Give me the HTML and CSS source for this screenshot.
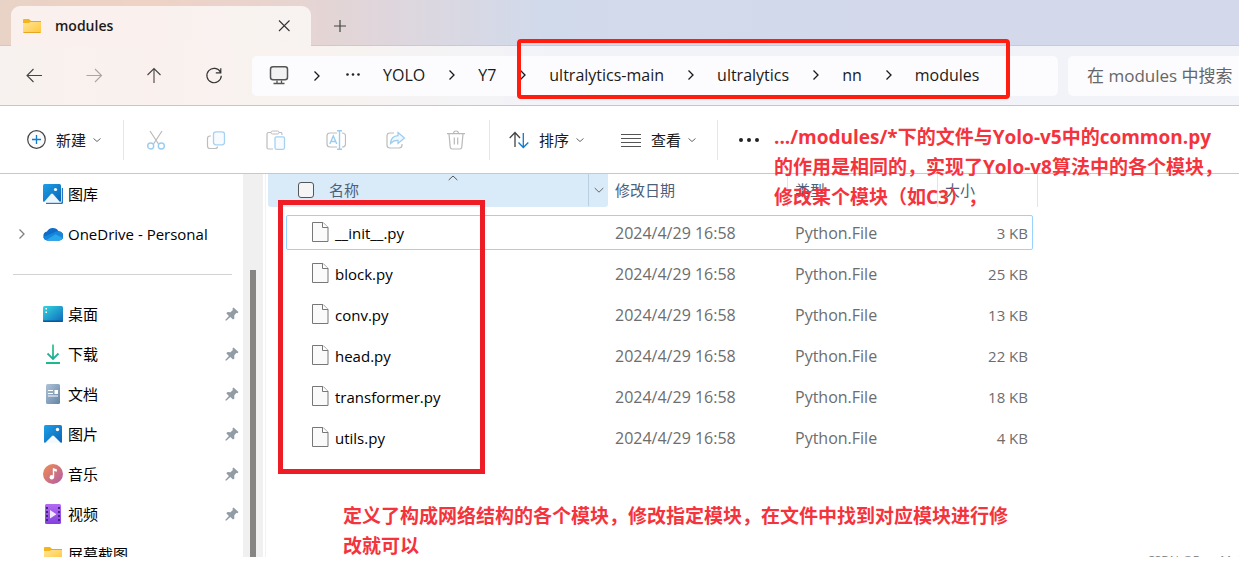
FILE: index.html
```html
<!DOCTYPE html>
<html lang="zh-CN">
<head>
<meta charset="utf-8">
<title>modules</title>
<link rel="stylesheet" href="styles.css">
</head>
<body>
<svg class="defs" aria-hidden="true">
  <defs>
    <linearGradient id="blue" x1="0" y1="0" x2="1" y2="1"><stop offset="0" stop-color="#1ea0e6"/><stop offset="1" stop-color="#0a63b8"/></linearGradient>
    <linearGradient id="teal" x1="0" y1="0" x2="1" y2="1"><stop offset="0" stop-color="#36d6dd"/><stop offset="1" stop-color="#0c68bd"/></linearGradient>
    <linearGradient id="green" x1="0" y1="0" x2="0" y2="1"><stop offset="0" stop-color="#35c98b"/><stop offset="1" stop-color="#14a59a"/></linearGradient>
    <linearGradient id="slate" x1="0" y1="0" x2="1" y2="1"><stop offset="0" stop-color="#afc3d8"/><stop offset="1" stop-color="#6484a4"/></linearGradient>
    <linearGradient id="music" x1="0" y1="0" x2="1" y2="1"><stop offset="0" stop-color="#f28e4f"/><stop offset="1" stop-color="#b05bab"/></linearGradient>
    <linearGradient id="violet" x1="0" y1="0" x2="0" y2="1"><stop offset="0" stop-color="#b36bf2"/><stop offset="1" stop-color="#8440e0"/></linearGradient>
    <linearGradient id="gold" x1="0" y1="0" x2="1" y2="1"><stop offset="0" stop-color="#ffe59b"/><stop offset="1" stop-color="#ffc83a"/></linearGradient>
    <symbol id="folder" viewBox="0 0 20 20"><path d="M1 4q0-1 1-1h5l2 2v3H1z" fill="#f4b41c"/><path d="M1 7h6l2-2h9q1 0 1 1v10q0 1-1 1H2q-1 0-1-1z" fill="url(#gold)"/><path d="M8 5.500h11M1.500 16.500h17" stroke="#e6a522" fill="none"/></symbol>
    <symbol id="chev" viewBox="0 0 10 14"><path d="M2.500 2.500 7 7l-4.500 4.500" fill="none" stroke="currentColor" stroke-width="1.300"/></symbol>
    <symbol id="down" viewBox="0 0 10 6"><path d="M1.500 1.500 5 4.500l3.500-3" fill="none" stroke="currentColor"/></symbol>
    <symbol id="pin" viewBox="0 0 14 14"><path d="M8.500.5 13.500 5l-1 1.300-1.300-.2-2 2.300.2 3-1.400 1.200-2.700-2.500L1.500 13.500.5 13.600.4 12.700 3.900 9 1.300 6.300 2.500 5.100l3 .1L7.800 3 7.500 1.600z" fill="#929ca5"/></symbol>
    <symbol id="file" viewBox="0 0 18 22"><path d="M1.500 1.500h10.500l5 5v14H1.500z" fill="#fafafa" stroke="#777"/><path d="M11.500 1.500v5H17" fill="#fff" stroke="#777"/></symbol>
  </defs>
</svg>

<div class="window">
  <header class="titlebar">
    <div class="tab">
      <svg class="i20"><use href="#folder"/></svg>
      <span class="tab-title">modules</span>
      <button class="icon-btn" aria-label="关闭"><svg class="i14" viewBox="0 0 14 14"><path d="M2 1.500 12.500 12M12.500 1.500 2 12" stroke="#333" stroke-width="1.100"/></svg></button>
    </div>
    <button class="icon-btn new-tab" aria-label="新标签"><svg class="i14" viewBox="0 0 14 14"><path d="M7 1v12M1 7h12" stroke="#444" stroke-width="1.200"/></svg></button>
  </header>

  <nav class="navbar">
    <div class="nav-buttons">
      <button class="icon-btn" aria-label="后退"><svg class="i20" viewBox="0 0 20 20"><path d="M18 9.500H3M9.500 3 3 9.500 9.500 16" fill="none" stroke="#444" stroke-width="1.100"/></svg></button>
      <button class="icon-btn" aria-label="前进"><svg class="i20" viewBox="0 0 20 20"><path d="M2.500 9.500h15M11 3l6.500 6.500L11 16" fill="none" stroke="#aaa5a3" stroke-width="1.100"/></svg></button>
      <button class="icon-btn" aria-label="向上"><svg class="i20" viewBox="0 0 20 20"><path d="M10 17V2.500M3.500 9 10 2.500 16.500 9" fill="none" stroke="#444" stroke-width="1.100"/></svg></button>
      <button class="icon-btn" aria-label="刷新"><svg class="i20" viewBox="0 0 20 20"><path d="M16.500 6.200A7.200 7.200 0 1 0 17.300 9.800M16.800 2.300v4.500h-5" fill="none" stroke="#333" stroke-width="1.200"/></svg></button>
    </div>
    <div class="address">
      <svg class="i20" viewBox="0 0 20 20"><rect x="1.500" y=".8" width="17" height="13" rx="2.500" fill="#f2f2f2" stroke="#555" stroke-width="1.500"/><path d="M8 14.500v2.500M12.500 14.500v2.500M4.500 17.500h11" stroke="#555" stroke-width="1.300"/></svg>
      <svg class="chev root"><use href="#chev"/></svg>
      <button class="icon-btn" aria-label="更多路径"><svg class="i16" viewBox="0 0 16 16"><g fill="#222"><circle cx="2.500" cy="6.500" r="1.300"/><circle cx="8" cy="6.500" r="1.300"/><circle cx="13.500" cy="6.500" r="1.300"/></g></svg></button>
      <ol class="crumbs">
        <li><a href="#">YOLO</a></li>
        <li><svg class="chev"><use href="#chev"/></svg><a href="#">Y7</a></li>
        <li><svg class="chev"><use href="#chev"/></svg><a href="#">ultralytics-main</a></li>
        <li><svg class="chev"><use href="#chev"/></svg><a href="#">ultralytics</a></li>
        <li><svg class="chev"><use href="#chev"/></svg><a href="#">nn</a></li>
        <li><svg class="chev"><use href="#chev"/></svg><a href="#">modules</a></li>
      </ol>
    </div>
    <input class="search" type="text" aria-label="搜索" placeholder="在 modules 中搜索">
  </nav>

  <div class="toolbar">
    <button class="cmd"><svg class="i20" viewBox="0 0 20 20"><circle cx="10.500" cy="9.500" r="8.800" fill="#fafafa" stroke="#444" stroke-width="1.200"/><path d="M10.500 5v9M6 9.500h9" stroke="#0f7bd0" stroke-width="1.300"/></svg>新建<svg class="down"><use href="#down"/></svg></button>
    <div class="group">
      <button class="icon-btn" aria-label="剪切"><svg class="i20" viewBox="0 0 20 20"><path d="M4 1l8.500 13M16 1 7.500 14" stroke="#b9b9b9" stroke-width="1.200"/><g fill="none" stroke="#9accf0" stroke-width="1.400"><circle cx="4.700" cy="16" r="3"/><circle cx="15.300" cy="16" r="3"/></g></svg></button>
      <button class="icon-btn" aria-label="复制"><svg class="i20" viewBox="0 0 20 20"><path d="M5 6H4Q1.500 6 1.500 8.500V16q0 2.500 2.500 2.500h5q2.500 0 2.500-2" fill="none" stroke="#bdbdbd" stroke-width="1.200"/><rect x="7.500" y="1.800" width="11" height="13" rx="2.500" fill="#f7fbfe" stroke="#a5d1f2" stroke-width="1.300"/></svg></button>
      <button class="icon-btn" aria-label="粘贴"><svg class="i20" viewBox="0 0 20 20"><path d="M7 19H2.500q-1.500 0-1.500-1.500V4q0-1.500 1.500-1.500H5m8 0h2.500Q16 2.500 16 5" fill="none" stroke="#bdbdbd" stroke-width="1.200"/><rect x="5" y="1" width="8" height="3" rx="1.500" fill="#fff" stroke="#bdbdbd"/><rect x="9" y="6.800" width="9.500" height="12.500" rx="1.500" fill="#f7fbfe" stroke="#a5d1f2" stroke-width="1.300"/></svg></button>
      <button class="icon-btn" aria-label="重命名"><svg class="i20" viewBox="0 0 20 20"><path d="M11 3H4Q1 3 1 6v8q0 3 3 3h7M16 3q3.500 0 3.500 3v8q0 3-3.500 3" fill="none" stroke="#bdbdbd" stroke-width="1.200"/><path d="M3.800 14 7.300 6l3.500 8M5 11.500h4.600M11 .7h5M11 19.300h5M13.500.7v18.600" fill="none" stroke="#9accf0" stroke-width="1.400"/></svg></button>
      <button class="icon-btn" aria-label="共享"><svg class="i20" viewBox="0 0 20 20"><path d="M8 3H4Q1 3 1 6v9q0 3 3 3h9q3 0 3-3v-1" fill="none" stroke="#bdbdbd" stroke-width="1.200"/><path d="M12 2.500 18.500 8 12 13.500V10.300Q7.500 10 4.500 13.500 5 6 12 5.700z" fill="#eef7fd" stroke="#9accf0" stroke-width="1.200"/></svg></button>
      <button class="icon-btn" aria-label="删除"><svg class="i20" viewBox="0 0 20 20"><path d="M1 3.700h18M3 4l1.200 13q.2 2 2 2h7.600q1.800 0 2-2L17 4M7.500 3.500q0-2.500 2.500-2.500t2.500 2.500M8.300 7.500v7M11.700 7.500v7" fill="none" stroke="#b9b9b9" stroke-width="1.200"/></svg></button>
    </div>
    <div class="group menus">
      <button class="cmd"><svg class="i20" viewBox="0 0 20 20"><path d="M6 17V2.500M.7 8 6 2.500 11 8" fill="none" stroke="#444" stroke-width="1.300"/><path d="M14.300 3v14.500M9.500 12.500l4.800 5 5-5" fill="none" stroke="#0f7bd0" stroke-width="1.300"/></svg>排序<svg class="down"><use href="#down"/></svg></button>
      <button class="cmd"><svg class="i20" viewBox="0 0 20 20"><path d="M0 4.500h20M0 8.500h20M0 12.500h20M0 16.500h20" stroke="#555"/></svg>查看<svg class="down"><use href="#down"/></svg></button>
    </div>
    <button class="icon-btn more" aria-label="更多"><svg class="i22" viewBox="0 0 22 22"><g fill="#222"><circle cx="3" cy="11" r="2"/><circle cx="11" cy="11" r="2"/><circle cx="19" cy="11" r="2"/></g></svg></button>
  </div>

  <div class="content">
    <aside class="sidebar">
      <ul class="places">
        <li><svg class="i20" viewBox="0 0 20 20"><path d="M3 19.500h14.500q2 0 2-2V4" fill="none" stroke="#2476c2" stroke-width="1.500"/><rect width="18" height="18" rx="1.500" fill="url(#blue)"/><path d="M1 18 8 10q1-1 2 0l7 8z" fill="#eaf5fd"/><circle cx="12.500" cy="5.500" r="1.600" fill="#fff"/></svg><span>图库</span></li>
        <li class="expandable"><svg class="chev grey"><use href="#chev"/></svg><svg class="i20" viewBox="0 0 20 20"><path d="M4.500 16.500A4.500 4.500 0 0 1 4 7.600 6.500 6.500 0 0 1 15.500 7.300 4.600 4.600 0 0 1 16 16.500z" fill="#0f6cc9"/><path d="M4.500 16.500Q1 16 .3 13L11 8.500q3-2 6-.8 3 1.300 3 4.500 0 4.300-4.500 4.300z" fill="#1686dc"/><path d="M3 16.300 12.500 10.300 19.700 14q-1 2.500-4 2.500H4.500z" fill="#28a8ea"/></svg><span>OneDrive - Personal</span></li>
        <li class="divider"></li>
        <li><svg class="i20" viewBox="0 0 20 20"><rect y="2" width="20" height="16" rx="1.500" fill="url(#teal)"/><path d="M0 16.500h20V17q0 1-1 1H1q-1 0-1-1z" fill="#0a559c"/><path d="M2.500 4h1.500v1.500H2.500zM2.500 7.500h1.500V9H2.500z" fill="#fff"/></svg><span>桌面</span><svg class="i14"><use href="#pin"/></svg></li>
        <li><svg class="i20" viewBox="0 0 20 20"><path d="M10 .5V15M4.500 9.500l5.500 5.500 5.500-5.500M3 19h14" fill="none" stroke="url(#green)" stroke-width="1.800"/><path d="M3 19h14" stroke="#21bd8c" stroke-width="1.600"/></svg><span>下载</span><svg class="i14"><use href="#pin"/></svg></li>
        <li><svg class="i20" viewBox="0 0 20 20"><rect x="3" width="14" height="20" rx="1.500" fill="url(#slate)"/><path d="M5 6.500h5M5 9.500h5M5 12h10" stroke="#fff"/><path d="M11.500 6H15v4h-3.500z" fill="#fff"/></svg><span>文档</span><svg class="i14"><use href="#pin"/></svg></li>
        <li><svg class="i20" viewBox="0 0 20 20"><rect x="1" y="1" width="18" height="18" rx="1.500" fill="url(#blue)"/><path d="M2 19 9 12q1-1 2 0l7 7z" fill="#f4fafe"/><circle cx="14.500" cy="5.500" r="1.700" fill="#fff"/></svg><span>图片</span><svg class="i14"><use href="#pin"/></svg></li>
        <li><svg class="i20" viewBox="0 0 20 20"><circle cx="10" cy="10" r="10" fill="url(#music)"/><circle cx="8.800" cy="13.300" r="2.200" fill="#fff"/><path d="M9.800 13.500V4l4 1.200v2.500l-2.600-.8v6.600z" fill="#fff"/></svg><span>音乐</span><svg class="i14"><use href="#pin"/></svg></li>
        <li><svg class="i20" viewBox="0 0 20 20"><rect x="2" width="16" height="20" rx="1.500" fill="url(#violet)"/><path d="M4 3v15M16 3v15" stroke="#3f2580" stroke-width="2" stroke-dasharray="2 2"/><path d="M7 6v8.500l6.500-4.200z" fill="#f1e7fd"/></svg><span>视频</span><svg class="i14"><use href="#pin"/></svg></li>
        <li><svg class="i20"><use href="#folder"/></svg><span>屏幕截图</span></li>
      </ul>
      <div class="scrollbar"><div class="thumb"></div></div>
    </aside>

    <main class="files">
      <table>
        <thead>
          <tr>
            <th class="name-head"><input type="checkbox" aria-label="全选"><span>名称</span><svg class="sort-mark" viewBox="0 0 10 6"><path d="M.7 5 5 1l4.300 4" fill="none" stroke="#555"/></svg><button class="icon-btn filter" aria-label="筛选"><svg class="i10" viewBox="0 0 10 10"><path d="M.7 3 5 7.200 9.300 3" fill="none" stroke="#666"/></svg></button></th>
            <th>修改日期</th><th>类型</th><th>大小</th>
          </tr>
        </thead>
        <tbody>
          <tr class="focused"><td><svg class="file"><use href="#file"/></svg>__init__.py</td><td>2024/4/29 16:58</td><td>Python.File</td><td>3 KB</td></tr>
          <tr><td><svg class="file"><use href="#file"/></svg>block.py</td><td>2024/4/29 16:58</td><td>Python.File</td><td>25 KB</td></tr>
          <tr><td><svg class="file"><use href="#file"/></svg>conv.py</td><td>2024/4/29 16:58</td><td>Python.File</td><td>13 KB</td></tr>
          <tr><td><svg class="file"><use href="#file"/></svg>head.py</td><td>2024/4/29 16:58</td><td>Python.File</td><td>22 KB</td></tr>
          <tr><td><svg class="file"><use href="#file"/></svg>transformer.py</td><td>2024/4/29 16:58</td><td>Python.File</td><td>18 KB</td></tr>
          <tr><td><svg class="file"><use href="#file"/></svg>utils.py</td><td>2024/4/29 16:58</td><td>Python.File</td><td>4 KB</td></tr>
        </tbody>
      </table>
    </main>
  </div>

  <div class="mark mark-path"></div>
  <div class="mark mark-files"></div>
  <p class="note note-top">.../modules/*下的文件与Yolo-v5中的common.py<br>的作用是相同的，实现了Yolo-v8算法中的各个模块，<br>修改某个模块（如C3），</p>
  <p class="note note-bottom">定义了构成网络结构的各个模块，修改指定模块，在文件中找到对应模块进行修<br>改就可以</p>
  <span class="credit">CSDN @Run_Mulli</span>
</div>
</body>
</html>
```
FILE: styles.css
```css
* { box-sizing: border-box; }
body {
  margin: 0;
  background: #fff;
  color: #1a1a1a;
  font: 15px/20px "Open Sans", "Noto Sans CJK SC", sans-serif;
}
button, input { font: inherit; color: inherit; }
button { border: 0; padding: 0; background: none; }
svg { display: block; flex: none; }
ul, ol { list-style: none; margin: 0; padding: 0; }
a { color: inherit; text-decoration: none; }
.defs { position: absolute; width: 0; height: 0; }
.i10 { width: 10px; height: 10px; }
.i14 { width: 14px; height: 14px; }
.i16 { width: 16px; height: 16px; }
.i20 { width: 20px; height: 20px; }
.i22 { width: 22px; height: 22px; }
.chev { width: 10px; height: 14px; }
.down { width: 10px; height: 6px; color: #666; }
.icon-btn { display: flex; align-items: center; justify-content: center; }

.window {
  position: relative;
  display: flex;
  flex-direction: column;
  height: calc(100vh - 20px);
  margin-right: 19px;
  overflow: hidden;
}

.titlebar {
  display: flex;
  height: 46px;
  padding: 6px 0 0 11px;
  border-bottom: 1px solid #c6cada;
  background: linear-gradient(90deg, #e8d3c6 0, #eed2c5 12%, #e8d4ce 22%, #dfd6dc 31%, #d1daeb 44%, #d3d9eb 70%);
}
.tab {
  display: flex;
  align-items: center;
  width: 300px;
  height: 40px;
  padding: 0 20px 0 11px;
  border-radius: 9px 9px 0 0;
  background: linear-gradient(90deg, #faf0ed, #faf1ee 50%, #f7f3f1);
}
.tab-title { flex: 1; margin-left: 13px; font-size: 14px; font-weight: 600; }
.new-tab { width: 58px; }

.navbar {
  display: flex;
  align-items: center;
  height: 60px;
  border-bottom: 1px solid #c4c6d4;
  background: linear-gradient(90deg, #f7f2ef 0, #faf1ee 12%, #f7f3f1 28%, #f2f3f9 45%, #f2f3f9);
}
.nav-buttons { display: flex; gap: 40px; padding: 0 28px 0 24px; }
.address {
  display: flex;
  flex: 1;
  align-items: center;
  height: 40px;
  padding-left: 17px;
  border-radius: 5px;
  background: #fcfcfe;
}
.root { margin: 0 23px; }
.crumbs { display: flex; margin-left: 22px; padding-bottom: 1px; font-size: 16px; }
.crumbs li { display: flex; align-items: center; }
.crumbs .chev { margin: 0 21px 0 22px; }
.search {
  width: 171px;
  height: 40px;
  margin-left: 10px;
  padding: 0 0 0 19px;
  border: 0;
  border-radius: 5px 0 0 5px;
  background: #fcfcfe;
  font-size: 17px;
}
.search::placeholder { color: #666; }

.toolbar {
  display: flex;
  align-items: center;
  height: 68px;
  padding-left: 26px;
  border-bottom: 1px solid #c8c6d2;
}
.cmd { display: flex; align-items: center; gap: 10px; }
.cmd .down { margin-left: -4px; }
.group {
  display: flex;
  align-items: center;
  gap: 40px;
  height: 40px;
  margin-left: 21px;
  padding: 0 23px 0 22px;
  border: solid #e6e6e6;
  border-width: 0 1px;
}
.menus { gap: 36px; margin-left: 0; padding: 0 20px 0 19px; border-left: 0; }
.more { margin-left: 20px; }

.content { display: flex; flex: 1; min-height: 0; }
.sidebar {
  display: flex;
  width: 266px;
  padding-right: 2px;
  border-right: 1px solid #f2f2f2;
  overflow: hidden;
}
.places { flex: 1; color: #000; }
.places li { display: flex; align-items: center; gap: 5px; height: 40px; padding: 0 4px 0 43px; }
.places span { flex: 1; white-space: nowrap; }
.places .expandable { gap: 5px; padding-left: 17px; }
.expandable .grey { margin-right: 11px; color: #808080; }
.places .divider { height: 1px; margin: 20px 11px 19px 13px; padding: 0; background: #d2d2d2; }
.scrollbar { width: 20px; padding-top: 96px; background: #f0f0f0; }
.thumb { width: 6px; height: 100%; margin-left: 7px; background: #868584; }

.files { flex: 1; padding-left: 2px; }
table, thead, tbody { display: block; }
tr { display: grid; grid-template-columns: 340px 180px 150px 100px; }
th {
  display: flex;
  align-items: center;
  height: 33px;
  padding: 0 0 2px 7px;
  border-right: 1px solid #e4e4e4;
  color: #4c607a;
  font-weight: 400;
  text-align: left;
}
.name-head { position: relative; padding-left: 30px; border: 0; border-radius: 0 0 3px 3px; background: #d9ebf9; }
.name-head span { flex: 1; margin-left: 15px; }
.name-head input {
  appearance: none;
  width: 16px;
  height: 16px;
  margin: 0;
  border: 1px solid #555;
  border-radius: 3px;
  background: #f5f5f5;
}
.sort-mark { position: absolute; top: 1px; left: 180px; width: 10px; height: 6px; }
.filter { width: 20px; height: 33px; border-left: 1px solid #b9cfe0; }
tbody { padding: 8px 0 0 18px; font-size: 16px; }
tbody tr {
  grid-template-columns: 321px 180px 150px 94px;
  width: 747px;
  height: 35px;
  margin-bottom: 6px;
  border: 1px solid transparent;
  border-radius: 2px;
}
tbody .focused { border-color: #99d1ff; }
td { display: flex; align-items: center; padding: 0 0 0 7px; color: #6d6d6d; }
td:first-child { gap: 6px; padding-left: 24px; color: #000; font-size: 15px; }
td:last-child { justify-content: flex-end; padding-right: 4px; font-size: 15px; }
.file { width: 18px; height: 22px; margin-bottom: 2px; }

.mark { position: absolute; pointer-events: none; }
.mark-path { top: 39px; left: 517px; width: 493px; height: 60px; border: 4px solid #ff1d10; border-radius: 4px; }
.mark-files { top: 200px; left: 278px; width: 207px; height: 274px; border: 5px solid #ee1c25; }
.note {
  position: absolute;
  margin: 0;
  color: #f5333c;
  font-size: 19px;
  font-weight: 700;
  line-height: 30px;
  white-space: nowrap;
  text-spacing-trim: space-all;
}
.note-top { top: 122px; left: 774px; }
.note-bottom { top: 501px; left: 343px; }
.credit { position: absolute; top: 551px; left: 1147px; color: #888; font-size: 12px; white-space: nowrap; }
```
